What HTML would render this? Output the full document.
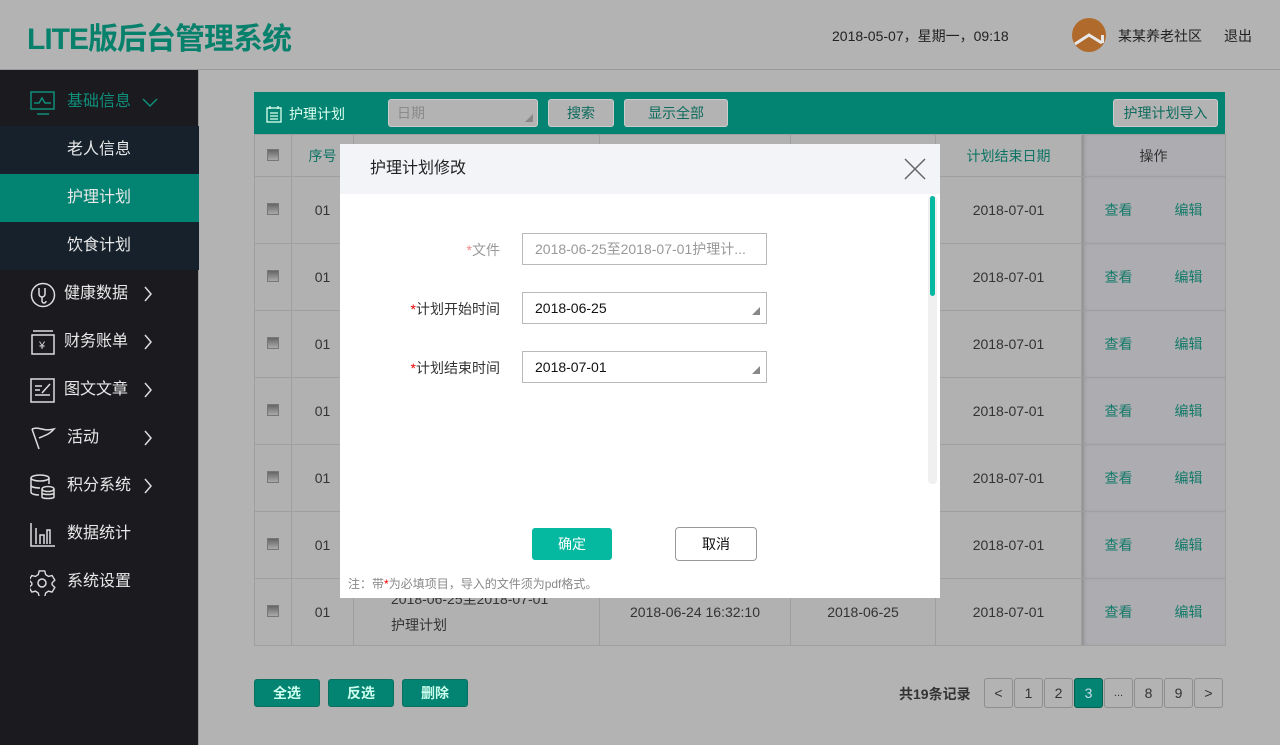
<!DOCTYPE html>
<html><head><meta charset="utf-8"><style>
*{margin:0;padding:0;box-sizing:border-box}
body{width:1280px;height:745px;overflow:hidden;background:#b3b3b3;font-family:"Liberation Sans","Noto Sans CJK SC",sans-serif;position:relative;color:#333}
.a{position:absolute}
.hdr{left:0;top:0;width:1280px;height:70px;border-bottom:1px solid #9a9a9a}
.side{left:0;top:70px;width:199px;height:675px;background:#1b1a1f;border-right:1px solid #999}
.mi{position:absolute;left:0;width:199px;height:48px;line-height:48px;font-size:16px;color:#e8e8e8}
.tb{left:254px;top:92px;width:971px;height:43px;background:#038371}
.btn{position:absolute;background:#b3b3b3;border:1px solid #ccc;border-radius:3px;text-align:center;font-size:14px;color:#0d6b5e;line-height:26px;height:28px}
table{position:absolute;left:254px;top:134px;border-collapse:collapse;font-size:14px;color:#333;table-layout:fixed;width:971px}
td{border:1px solid #9f9f9f;text-align:center;background:#b1b1b1;height:67px;white-space:nowrap}
tr.h td{height:42px;color:#0c7464}
td.op{background:#adadb1;box-shadow:inset 4px 0 5px -3px rgba(0,0,0,.25)}
.cb{display:inline-block;width:12px;height:12px;background:linear-gradient(#666,#aaa);border:1px solid #777}
.lk{color:#157a6a;margin:0 21px}
.modal{left:340px;top:144px;width:600px;height:454px;background:#fff}
.mh{left:0;top:0;width:600px;height:50px;background:#f3f4f8;font-size:16px;color:#222;line-height:50px;padding-left:30px}
.lbl{position:absolute;width:160px;text-align:right;font-size:14px;color:#333}
.inp{position:absolute;left:182px;width:245px;height:32px;border:1px solid #b9b9b9;font-size:14px;line-height:30px;padding-left:12px}
.tri{position:absolute;right:6px;bottom:8px;width:0;height:0;border-left:8px solid transparent;border-bottom:8px solid #888}
.bb{position:absolute;top:679px;height:28px;width:66px;background:#038371;border:1px solid #0a6f60;border-radius:3px;color:#cfe;font-weight:bold;font-size:14px;text-align:center;line-height:26px}
.pg{position:absolute;top:678px;width:29px;height:30px;border:1px solid #8e8e8e;border-radius:3px;text-align:center;line-height:28px;font-size:14px;color:#333;background:#b3b3b3}
</style></head><body>
<div class="a hdr">
 <div class="a" style="left:27px;top:14px;font-size:30px;font-weight:bold;color:#07806c;letter-spacing:-1px">LITE版后台管理系统</div>
 <div class="a" style="left:832px;top:26px;font-size:14px;color:#222">2018-05-07，星期一，09:18</div>
 <svg class="a" style="left:1072px;top:18px" width="34" height="34" viewBox="0 0 34 34"><circle cx="17" cy="17" r="17" fill="#b06a2c"/><path d="M3 26 L17 17 L30 25" stroke="#e8e8e8" stroke-width="3" fill="none"/><rect x="29" y="17" width="3" height="8" fill="#e8e8e8"/></svg>
 <div class="a" style="left:1118px;top:26px;font-size:14px;color:#222">某某养老社区</div>
 <div class="a" style="left:1224px;top:26px;font-size:14px;color:#222">退出</div>
</div>
<div class="a side">
 <div class="mi" style="top:8px;color:#0e8f7a;padding-left:67px">基础信息
  <svg class="a" style="left:30px;top:12px" width="26" height="26" viewBox="0 0 26 26" fill="none" stroke="#0e8f7a" stroke-width="1.5"><rect x="1" y="2" width="23" height="17"/><path d="M4 13h5l3-5 3 5h6M7 24h12"/></svg>
  <svg class="a" style="left:142px;top:20px" width="16" height="10"><path d="M1 1l7 7 7-7" stroke="#0e8f7a" stroke-width="1.5" fill="none"/></svg></div>
 <div class="mi" style="top:56px;background:#16212b;padding-left:67px">老人信息</div>
 <div class="mi" style="top:104px;background:#038371;padding-left:67px">护理计划</div>
 <div class="mi" style="top:152px;background:#16212b;padding-left:67px">饮食计划</div>
 <div class="mi" style="top:200px;padding-left:64px">健康数据<svg class="a" style="left:30px;top:12px" width="26" height="26" fill="none" stroke="#ddd" stroke-width="1.5"><circle cx="13" cy="13" r="11.5"/><path d="M9 6v6a3 3 0 006 0V6M12 15v4a2 2 0 004 0"/></svg></div>
 <div class="mi" style="top:248px;padding-left:64px">财务账单<svg class="a" style="left:30px;top:12px" width="26" height="26" fill="none" stroke="#ddd" stroke-width="1.5"><path d="M3 1h20M2 5h22v19H2z"/><text x="9" y="19" font-size="11" fill="#ddd" stroke="none">¥</text></svg></div>
 <div class="mi" style="top:296px;padding-left:64px">图文文章<svg class="a" style="left:30px;top:12px" width="26" height="26" fill="none" stroke="#ddd" stroke-width="1.5"><rect x="1" y="1" width="23" height="23"/><path d="M5 8h7M5 12h5M5 17h15M12 15l8-9"/></svg></div>
 <div class="mi" style="top:344px;padding-left:67px">活动<svg class="a" style="left:30px;top:12px" width="26" height="26" fill="none" stroke="#ddd" stroke-width="1.5"><path d="M2 3l7 20M2 3c8-3 10 3 22 0c-4 5-8 6-15 9"/></svg></div>
 <div class="mi" style="top:392px;padding-left:67px">积分系统<svg class="a" style="left:30px;top:12px" width="26" height="26" fill="none" stroke="#ddd" stroke-width="1.5"><ellipse cx="10" cy="4" rx="9" ry="3"/><path d="M1 4v14c0 2 4 3 8 3M19 4v6M1 11c0 2 4 3 9 3"/><ellipse cx="18" cy="15" rx="6" ry="2.5"/><path d="M12 15v8c0 2 12 2 12 0v-8M12 19c0 2 12 2 12 0"/></svg></div>
 <div class="mi" style="top:440px;padding-left:67px">数据统计<svg class="a" style="left:30px;top:12px" width="26" height="26" fill="none" stroke="#ddd" stroke-width="1.5"><path d="M1 1v23h24M6 22V6M10 22v-9h4v9M17 22V8h3v14"/></svg></div>
 <div class="mi" style="top:488px;padding-left:67px">系统设置<svg class="a" style="left:30px;top:12px" width="26" height="26" fill="none" stroke="#ddd" stroke-width="1.5"><path d="M10 1h6l1 4 3 2 4-1 3 5-3 3v2l3 3-3 5-4-1-3 2-1 4h-6l-1-4-3-2-4 1-3-5 3-3v-2l-3-3 3-5 4 1 3-2z" transform="scale(.92)"/><circle cx="12" cy="13" r="4"/></svg></div>
 <svg class="a" style="left:143px;top:216px" width="10" height="260" fill="none" stroke="#ddd" stroke-width="1.5"><path d="M2 1l6 7-6 7M2 49l6 7-6 7M2 97l6 7-6 7M2 145l6 7-6 7M2 193l6 7-6 7"/></svg>
</div>
<div class="a tb">
 <svg class="a" style="left:12px;top:13px" width="16" height="18" fill="none" stroke="#dfe" stroke-width="1.3"><rect x="1" y="3" width="14" height="14"/><path d="M4 1v3M12 1v3M4 8h8M4 11h8M4 14h8"/></svg>
 <div class="a" style="left:35px;top:12px;color:#dfe;font-size:14px">护理计划</div>
 <div class="btn" style="left:134px;top:7px;width:150px;text-align:left;padding-left:8px;color:#8a8a8a">日期<div class="tri" style="right:4px;bottom:4px"></div></div>
 <div class="btn" style="left:294px;top:7px;width:66px">搜索</div>
 <div class="btn" style="left:370px;top:7px;width:104px">显示全部</div>
 <div class="btn" style="left:859px;top:7px;width:105px">护理计划导入</div>
</div>
<table>
<colgroup><col style="width:37px"><col style="width:62px"><col style="width:246px"><col style="width:191px"><col style="width:145px"><col style="width:146px"><col style="width:144px"></colgroup>
<tr class="h"><td><span class="cb"></span></td><td>序号</td><td></td><td></td><td></td><td>计划结束日期</td><td class="op" style="color:#333">操作</td></tr>
<tr><td><span class="cb"></span></td><td>01</td><td></td><td></td><td></td><td>2018-07-01</td><td class="op"><span class="lk">查看</span><span class="lk">编辑</span></td></tr>
<tr><td><span class="cb"></span></td><td>01</td><td></td><td></td><td></td><td>2018-07-01</td><td class="op"><span class="lk">查看</span><span class="lk">编辑</span></td></tr>
<tr><td><span class="cb"></span></td><td>01</td><td></td><td></td><td></td><td>2018-07-01</td><td class="op"><span class="lk">查看</span><span class="lk">编辑</span></td></tr>
<tr><td><span class="cb"></span></td><td>01</td><td></td><td></td><td></td><td>2018-07-01</td><td class="op"><span class="lk">查看</span><span class="lk">编辑</span></td></tr>
<tr><td><span class="cb"></span></td><td>01</td><td></td><td></td><td></td><td>2018-07-01</td><td class="op"><span class="lk">查看</span><span class="lk">编辑</span></td></tr>
<tr><td><span class="cb"></span></td><td>01</td><td></td><td></td><td></td><td>2018-07-01</td><td class="op"><span class="lk">查看</span><span class="lk">编辑</span></td></tr>
<tr><td><span class="cb"></span></td><td>01</td><td style="text-align:left;padding-left:37px;line-height:26px">2018-06-25至2018-07-01<br>护理计划</td><td>2018-06-24 16:32:10</td><td>2018-06-25</td><td>2018-07-01</td><td class="op"><span class="lk">查看</span><span class="lk">编辑</span></td></tr>
</table>
<div class="a modal">
 <div class="a mh">护理计划修改</div>
 <svg class="a" style="left:564px;top:14px" width="22" height="22" stroke="#666" stroke-width="1.5"><path d="M1 1l20 20M21 1L1 21"/></svg>
 <div class="a" style="left:588px;top:52px;width:9px;height:288px;background:#f0f0f0;border-radius:4px"></div>
 <div class="a" style="left:590px;top:52px;width:5px;height:100px;background:#05b9a0;border-radius:3px"></div>
 <div class="lbl" style="top:96px;color:#999"><span style="color:#e88">*</span>文件</div>
 <div class="inp" style="top:89px;color:#999">2018-06-25至2018-07-01护理计...</div>
 <div class="lbl" style="top:155px"><span style="color:#e00">*</span>计划开始时间</div>
 <div class="inp" style="top:148px;color:#111">2018-06-25<div class="tri"></div></div>
 <div class="lbl" style="top:214px"><span style="color:#e00">*</span>计划结束时间</div>
 <div class="inp" style="top:207px;color:#111">2018-07-01<div class="tri"></div></div>
 <div class="a" style="left:192px;top:384px;width:80px;height:32px;background:#05b9a0;border-radius:3px;color:#fff;font-size:14px;text-align:center;line-height:32px">确定</div>
 <div class="a" style="left:335px;top:383px;width:82px;height:34px;border:1px solid #999;border-radius:4px;color:#111;font-size:14px;text-align:center;line-height:32px">取消</div>
 <div class="a" style="left:8px;top:431px;font-size:12px;color:#888">注：带<span style="color:#e00">*</span>为必填项目，导入的文件须为pdf格式。</div>
</div>
<div class="bb" style="left:254px">全选</div>
<div class="bb" style="left:328px">反选</div>
<div class="bb" style="left:402px">删除</div>
<div class="a" style="left:899px;top:684px;font-size:14px;font-weight:bold;color:#333">共19条记录</div>
<div class="pg" style="left:984px">&lt;</div>
<div class="pg" style="left:1014px">1</div>
<div class="pg" style="left:1044px">2</div>
<div class="pg" style="left:1074px;background:#038371;color:#cde;border-color:#06604f">3</div>
<div class="pg" style="left:1104px;font-size:11px">...</div>
<div class="pg" style="left:1134px">8</div>
<div class="pg" style="left:1164px">9</div>
<div class="pg" style="left:1194px">&gt;</div>
</body></html>
